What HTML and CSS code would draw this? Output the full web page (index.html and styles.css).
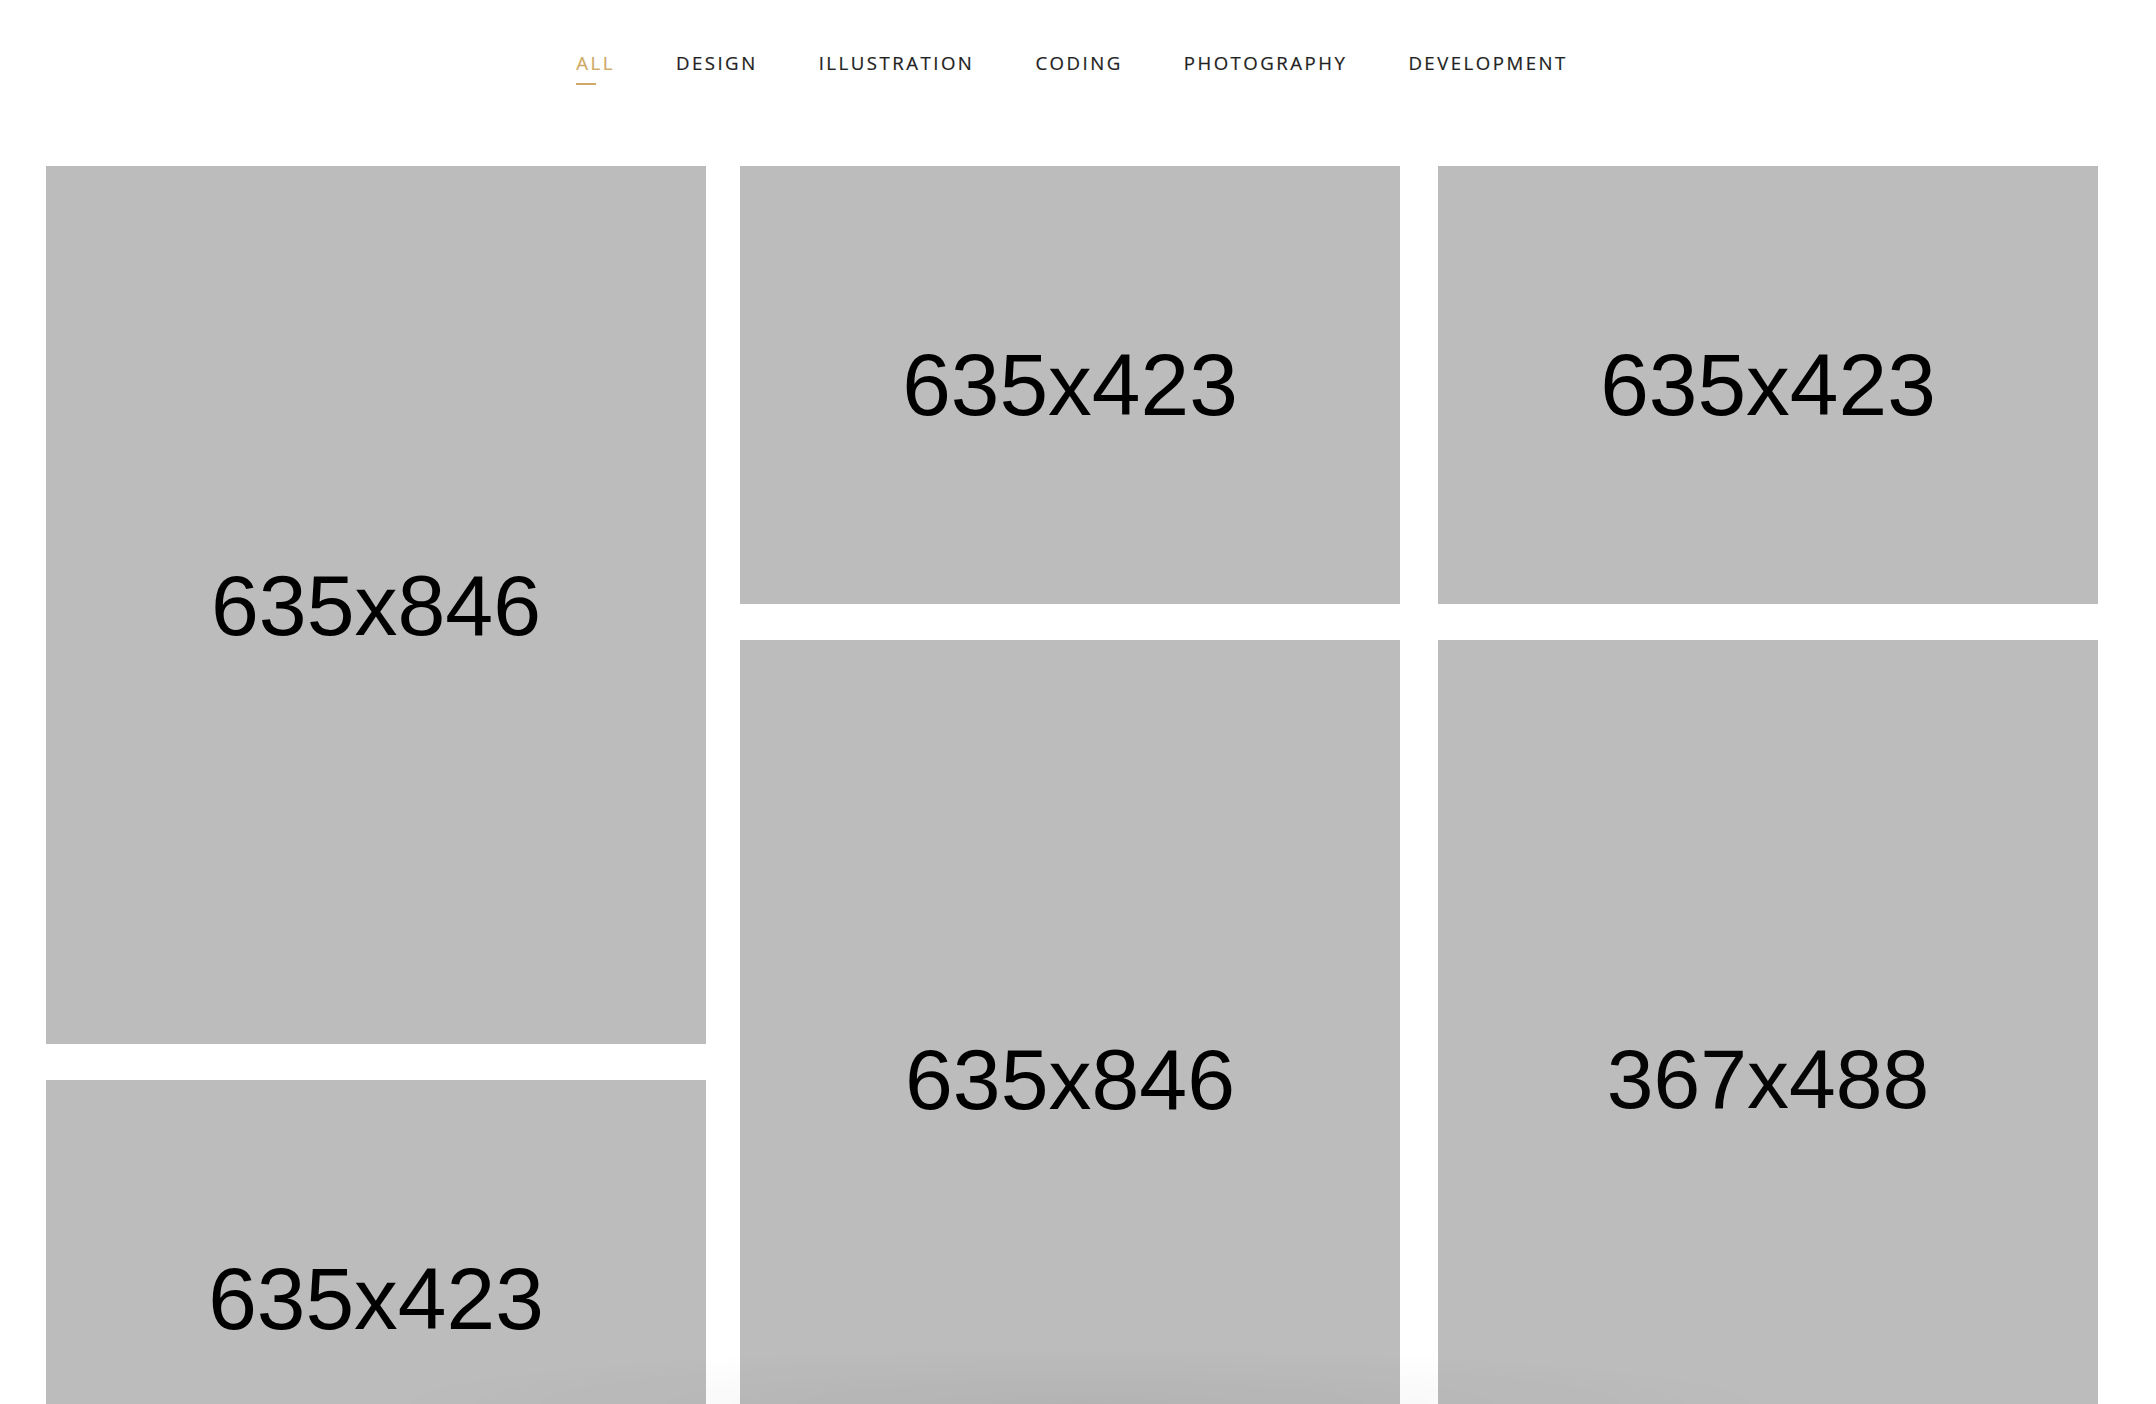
FILE: index.html
```html
<!DOCTYPE html>
<html lang="en">
<head>
<meta charset="utf-8">
<title>Portfolio</title>
<link rel="stylesheet" href="styles.css">
</head>
<body>
<div class="page">
  <nav class="filters">
    <a class="filter active" href="#">ALL</a>
    <a class="filter" href="#">DESIGN</a>
    <a class="filter" href="#">ILLUSTRATION</a>
    <a class="filter" href="#">CODING</a>
    <a class="filter" href="#">PHOTOGRAPHY</a>
    <a class="filter" href="#">DEVELOPMENT</a>
  </nav>
  <main class="grid">
    <div class="col">
      <div class="tile tall">635x846</div>
      <div class="tile short">635x423</div>
    </div>
    <div class="col">
      <div class="tile short">635x423</div>
      <div class="tile tall">635x846</div>
    </div>
    <div class="col col-last">
      <div class="tile short">635x423</div>
      <div class="tile tall small">367x488</div>
    </div>
  </main>
</div>
<div class="bottom-shade"></div>
</body>
</html>
```

FILE: styles.css
```css
html, body {
  margin: 0;
  padding: 0;
  background: #ffffff;
  overflow: hidden;
}

.page {
  width: 2144px;
  height: 1404px;
  overflow: hidden;
}

.filters {
  display: flex;
  justify-content: center;
  gap: 61px;
  padding-top: 51px;
  height: 115px;
  box-sizing: border-box;
  font-family: "Open Sans", "Liberation Sans", sans-serif;
}

.filter {
  display: block;
  font-size: 18.6px;
  line-height: 24px;
  letter-spacing: 2.5px;
  color: #222222;
  text-decoration: none;
  -webkit-text-stroke: 0.2px #222222;
}

.filter.active {
  color: #cfa965;
  -webkit-text-stroke: 0.2px #cfa965;
}

.filter.active::after {
  content: "";
  display: block;
  width: 20px;
  height: 2px;
  margin-top: 8px;
  background: #cfa965;
}

.grid {
  width: 2052px;
  margin: 51px auto 0;
  display: grid;
  grid-template-columns: 660px 660px 656px;
  column-gap: 34px;
}

.col {
  display: flex;
  flex-direction: column;
  gap: 36px;
  width: 660px;
}

.col-last {
  margin-left: 4px;
}

.tile {
  background: #bcbcbc;
  display: flex;
  align-items: center;
  justify-content: center;
  font-family: "Liberation Sans", Arial, sans-serif;
  font-size: 86px;
  color: #000000;
}

.tile.tall {
  height: 878px;
}

.tile.short {
  height: 438px;
  font-size: 87.5px;
}

.tile.small {
  font-size: 84px;
  color: #050505;
}

.bottom-shade {
  position: fixed;
  left: 380px;
  bottom: 0;
  width: 1400px;
  height: 56px;
  background: radial-gradient(ellipse 50% 100% at 50% 100%, rgba(0, 0, 0, 0.045), rgba(0, 0, 0, 0) 100%);
  pointer-events: none;
}
```
